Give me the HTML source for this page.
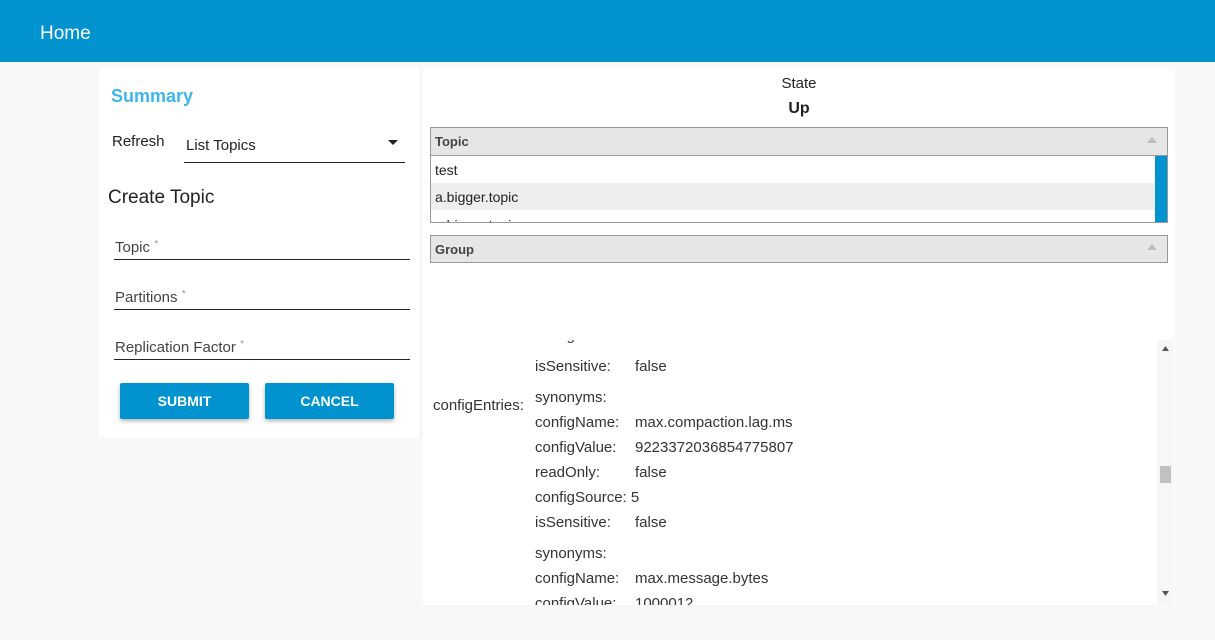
<!DOCTYPE html>
<html><head><style>
*{margin:0;padding:0;box-sizing:border-box}
body{width:1215px;height:640px;background:#f8f8f8;font-family:"Liberation Sans",sans-serif;position:relative;overflow:hidden;color:#222}
.a{position:absolute;white-space:nowrap}
.hdr{left:0;top:0;width:1215px;height:62px;background:#0093cf}
.card{background:#fff}
.line{position:absolute;height:1px;background:#222}
.btn{position:absolute;background:#0093cf;color:#fff;font-weight:bold;font-size:14px;text-align:center;line-height:36px;box-shadow:0 2px 4px rgba(0,0,0,.3);border-radius:2px}
.th{position:absolute;background:#e6e6e6;border:1px solid #999;font-weight:bold;font-size:13px;color:#444;padding-left:4px;line-height:28px}
.row{font-size:15px;color:#333}
</style></head><body>
<div class="a hdr"></div>
<div class="a" style="left:40px;top:23px;color:#fff;font-size:19px">Home</div>

<div class="a card" style="left:99px;top:68px;width:320px;height:370px"></div>
<div class="a" style="left:111px;top:86px;color:#3fb5ea;font-size:18px;font-weight:bold">Summary</div>
<div class="a" style="left:112px;top:133px;font-size:15px">Refresh</div>
<div class="a" style="left:186px;top:137px;font-size:15px">List Topics</div>
<svg class="a" style="left:388px;top:140px" width="10" height="6"><path d="M0 0H10L5 5Z" fill="#222"/></svg>
<div class="line" style="left:184px;top:162px;width:221px"></div>
<div class="a" style="left:108px;top:187px;font-size:19px">Create Topic</div>
<div class="a" style="left:115px;top:239px;font-size:15px;color:#444">Topic <span style="font-size:10px;color:#999;vertical-align:top">*</span></div>
<div class="line" style="left:114px;top:259px;width:296px"></div>
<div class="a" style="left:115px;top:289px;font-size:15px;color:#444">Partitions <span style="font-size:10px;color:#999;vertical-align:top">*</span></div>
<div class="line" style="left:114px;top:309px;width:296px"></div>
<div class="a" style="left:115px;top:339px;font-size:15px;color:#444">Replication Factor <span style="font-size:10px;color:#999;vertical-align:top">*</span></div>
<div class="line" style="left:114px;top:359px;width:296px"></div>
<div class="btn" style="left:120px;top:383px;width:129px;height:36px">SUBMIT</div>
<div class="btn" style="left:265px;top:383px;width:129px;height:36px">CANCEL</div>

<div class="a card" style="left:423px;top:68px;width:752px;height:537px"></div>
<div class="a" style="left:423px;width:752px;text-align:center;top:75px;font-size:15px">State</div>
<div class="a" style="left:423px;width:752px;text-align:center;top:100px;font-size:16px;font-weight:bold">Up</div>

<div class="a" style="left:430px;top:127px;width:738px;height:96px;border:1px solid #999;background:#fff;overflow:hidden">
 <div class="a" style="left:0;top:28px;width:724px;height:27px;font-size:14px;line-height:29px;padding-left:4px">test</div>
 <div class="a" style="left:0;top:55px;width:724px;height:27px;background:#eee;font-size:14px;line-height:29px;padding-left:4px">a.bigger.topic</div>
 <div class="a" style="left:0;top:84px;font-size:14px;line-height:27px;padding-left:4px">a.bigger.topic</div>
 <div class="a" style="left:724px;top:28px;width:12px;height:66px;background:#0093cf"></div>
</div>
<div class="th" style="left:430px;top:127px;width:738px;height:29px">Topic</div>
<svg class="a" style="left:1147px;top:137px" width="10" height="6"><path d="M0 6H10L5 0Z" fill="#bbb"/></svg>
<div class="th" style="left:430px;top:235px;width:738px;height:28px">Group</div>
<svg class="a" style="left:1147px;top:244px" width="10" height="6"><path d="M0 6H10L5 0Z" fill="#bbb"/></svg>

<div class="a" style="left:425px;top:340px;width:750px;height:265px;overflow:hidden">
 <div class="a row" style="left:110px;top:-13px">configSource: 5</div>
 <div class="a row" style="left:110px;top:18px">isSensitive:</div><div class="a row" style="left:210px;top:18px">false</div>
 <div class="a row" style="left:8px;top:57px">configEntries:</div>
 <div class="a row" style="left:110px;top:49px">synonyms:</div>
 <div class="a row" style="left:110px;top:74px">configName:</div><div class="a row" style="left:210px;top:74px">max.compaction.lag.ms</div>
 <div class="a row" style="left:110px;top:99px">configValue:</div><div class="a row" style="left:210px;top:99px">9223372036854775807</div>
 <div class="a row" style="left:110px;top:124px">readOnly:</div><div class="a row" style="left:210px;top:124px">false</div>
 <div class="a row" style="left:110px;top:149px">configSource: 5</div>
 <div class="a row" style="left:110px;top:174px">isSensitive:</div><div class="a row" style="left:210px;top:174px">false</div>
 <div class="a row" style="left:110px;top:205px">synonyms:</div>
 <div class="a row" style="left:110px;top:230px">configName:</div><div class="a row" style="left:210px;top:230px">max.message.bytes</div>
 <div class="a row" style="left:110px;top:255px">configValue:</div><div class="a row" style="left:210px;top:255px">1000012</div>
 <div class="a" style="left:732px;top:0;width:17px;height:265px;background:#f7f7f7"></div>
 <div class="a" style="left:735px;top:126px;width:11px;height:17px;background:#c1c1c1"></div>
 <svg class="a" style="left:737px;top:6px" width="7" height="5"><path d="M0 5H7L3.5 0Z" fill="#555"/></svg>
 <svg class="a" style="left:737px;top:251px" width="7" height="5"><path d="M0 0H7L3.5 5Z" fill="#555"/></svg>
</div>
</body></html>
